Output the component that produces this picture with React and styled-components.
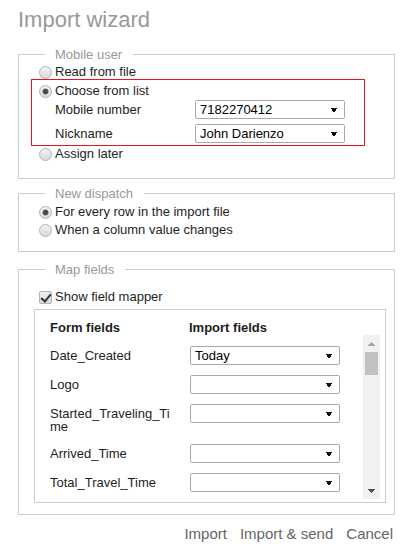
import React from "react";
import styled, { createGlobalStyle } from "styled-components";

const Global = createGlobalStyle`
  html, body { margin: 0; padding: 0; background: #fff; }
  body { font-family: "Liberation Sans", Arial, sans-serif; font-size: 13px; color: #1e1e1e; }
  * { box-sizing: border-box; }
`;

const Page = styled.div`
  width: 410px;
  padding: 7px 15px 0 18px;
`;

const Title = styled.h1`
  margin: 0;
  font-size: 22px;
  line-height: 26px;
  font-weight: normal;
  color: #999;
`;

const Group = styled.fieldset`
  margin: ${(p) => p.$mt}px 0 0 0;
  padding: ${(p) => p.$pt}px 0 ${(p) => p.$pb}px 20px;
  border: 1px solid #ccc;
  width: 377px;
  min-width: 0;
`;

const Legend = styled.legend`
  margin-left: 6px;
  padding: 0 11px 0 10px;
  font-size: 13px;
  line-height: 15px;
  color: #999;
`;

const Option = styled.label`
  display: flex;
  align-items: center;
  height: 18px;
  line-height: 18px;
  margin-top: ${(p) => p.$mt || 0}px;
`;

const Radio = styled.input.attrs({ type: "radio" })`
  appearance: none;
  width: 13px;
  height: 13px;
  margin: 1px 3px 0 0;
  border-radius: 50%;
  border: 1px solid #b4b4b4;
  background: linear-gradient(#f2f2f2, #dadada);
  &:checked {
    background: radial-gradient(circle, #4a4a4a 0 2.2px, #8a8a8a 2.8px, transparent 3.4px),
      linear-gradient(#f2f2f2, #dadada);
  }
`;

const Check = styled.input.attrs({ type: "checkbox" })`
  appearance: none;
  position: relative;
  width: 13px;
  height: 13px;
  margin: 0 3px 0 0;
  border-radius: 2px;
  border: 1px solid #b4b4b4;
  background: linear-gradient(#f2f2f2, #dadada);
  &:checked::after {
    content: "";
    position: absolute;
    left: 3px;
    top: 0px;
    width: 4px;
    height: 8px;
    border-right: 2px solid #333;
    border-bottom: 2px solid #333;
    transform: rotate(40deg);
  }
`;

const Highlight = styled.div`
  width: 334px;
  margin: -2px 0 0 -8px;
  padding: 2px 0 2px 7px;
  border: 1px solid #e8141e;
`;

const FieldRow = styled.div`
  display: flex;
  align-items: center;
  height: 19px;
  padding-left: 16px;
  margin-top: ${(p) => p.$mt || 0}px;
`;

const FieldLabel = styled.span`
  width: 140px;
  line-height: 18px;
`;

const Select = styled.select`
  appearance: none;
  width: 150px;
  height: 19px;
  margin: 0;
  padding: 0 16px 0 4px;
  border: 1px solid #a9a9a9;
  border-radius: 2px;
  font-family: "Liberation Sans", Arial, sans-serif;
  font-size: 13px;
  line-height: 17px;
  color: #000;
  background: conic-gradient(from -31deg at 50% 100%, #111 62deg, transparent 0) right 7px top 7px / 6px 5px no-repeat,
    #fff;
  outline: none;
`;

const MapperBox = styled.div`
  width: 352px;
  margin: 3px 0 0 -5px;
  padding: 10px 5px 3px 15px;
  border: 1px solid #ccc;
`;

const HeaderRow = styled.div`
  display: grid;
  grid-template-columns: 139px 1fr;
  height: 15px;
  line-height: 15px;
  font-weight: bold;
`;

const Scroller = styled.div`
  display: flex;
  height: 164px;
`;

const MapGrid = styled.div`
  flex: 1;
  display: grid;
  grid-template-columns: 140px 150px;
  grid-auto-rows: min-content;
  row-gap: 10px;
  align-items: start;
  padding: 11px 0 0;
  overflow: hidden;
`;

const MapLabel = styled.div`
  padding: 3px 10px 1px 0;
  line-height: 13px;
  word-break: break-all;
`;

const Track = styled.div`
  width: 17px;
  display: flex;
  flex-direction: column;
  background: #f1f1f1;
`;

const ArrowButton = styled.div`
  height: 17px;
  display: flex;
  align-items: center;
  justify-content: center;
  &::before {
    content: "";
    width: 7px;
    height: 4px;
    background: ${(p) =>
      p.$down
        ? "conic-gradient(from -41deg at 50% 100%, #505050 82deg, transparent 0)"
        : "conic-gradient(from 139deg at 50% 0, #a3a3a3 82deg, transparent 0)"};
    margin-top: ${(p) => (p.$down ? "0" : "1px")};
  }
`;

const Thumb = styled.div`
  height: 23px;
  margin: 0 2px;
  background: #c1c1c1;
`;

const TrackSpace = styled.div`
  flex: 1;
`;

const Footer = styled.div`
  display: flex;
  justify-content: flex-end;
  gap: 13px;
  margin-top: 10px;
  padding-right: 2px;
`;

const Action = styled.a`
  font-size: 15px;
  line-height: 18px;
  color: #666;
  text-decoration: none;
  cursor: pointer;
`;

const fields = [
  ["Date_Created", "Today"],
  ["Logo", ""],
  ["Started_Traveling_Time", ""],
  ["Arrived_Time", ""],
  ["Total_Travel_Time", ""],
];

export default function App() {
  return (
    <Page>
      <Global />
      <Title>Import wizard</Title>

      <Group $mt={14} $pt={1} $pb={15}>
        <Legend>Mobile user</Legend>
        <Option>
          <Radio name="mu" />
          Read from file
        </Option>
        <Highlight>
          <Option>
            <Radio name="mu" defaultChecked />
            Choose from list
          </Option>
          <FieldRow>
            <FieldLabel>Mobile number</FieldLabel>
            <Select defaultValue="7182270412">
              <option>7182270412</option>
            </Select>
          </FieldRow>
          <FieldRow $mt={5}>
            <FieldLabel>Nickname</FieldLabel>
            <Select defaultValue="John Darienzo">
              <option>John Darienzo</option>
            </Select>
          </FieldRow>
        </Highlight>
        <Option $mt={-1}>
          <Radio name="mu" />
          Assign later
        </Option>
      </Group>

      <Group $mt={7} $pt={2} $pb={12}>
        <Legend>New dispatch</Legend>
        <Option>
          <Radio name="nd" defaultChecked />
          For every row in the import file
        </Option>
        <Option>
          <Radio name="nd" />
          When a column value changes
        </Option>
      </Group>

      <Group $mt={10} $pt={11} $pb={11}>
        <Legend>Map fields</Legend>
        <Option>
          <Check defaultChecked />
          Show field mapper
        </Option>
        <MapperBox>
          <HeaderRow>
            <span>Form fields</span>
            <span>Import fields</span>
          </HeaderRow>
          <Scroller>
            <MapGrid>
              {fields.map(([name, value]) => (
                <React.Fragment key={name}>
                  <MapLabel>{name}</MapLabel>
                  <Select defaultValue={value}>
                    <option value="">{""}</option>
                    {value && <option value={value}>{value}</option>}
                  </Select>
                </React.Fragment>
              ))}
            </MapGrid>
            <Track aria-hidden="true">
              <ArrowButton />
              <Thumb />
              <TrackSpace />
              <ArrowButton $down />
            </Track>
          </Scroller>
        </MapperBox>
      </Group>

      <Footer>
        <Action>Import</Action>
        <Action>Import &amp; send</Action>
        <Action>Cancel</Action>
      </Footer>
    </Page>
  );
}
